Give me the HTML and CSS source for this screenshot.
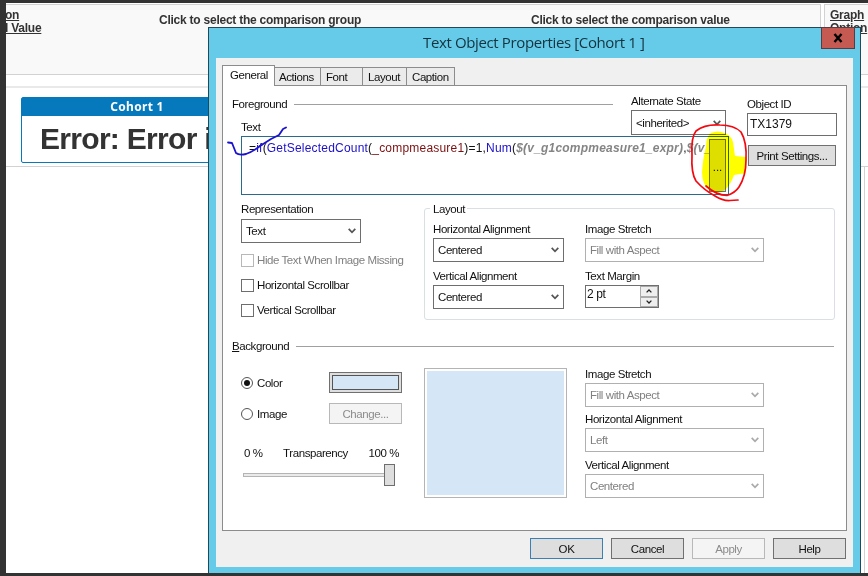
FILE: index.html
```html
<!DOCTYPE html>
<html lang="en">
<head>
    <meta charset="UTF-8">
    <meta name="viewport" content="width=device-width, initial-scale=1.0">
    <title>Text Object Properties</title>
    <link rel="stylesheet" href="styles.css">
</head>

<body>
    <!-- Document behind the dialog -->
    <div class="sheet">
        <div class="sheet-top">
            <div class="filter-panel">
                <div class="side-link cut-left"><span>on</span><span>l Value</span></div>
                <div class="group-title">Click to select the comparison group</div>
                <div class="value-title">Click to select the comparison value</div>
            </div>
            <div class="options-panel">
                <div class="side-link"><span>Graph</span><span>Option</span></div>
            </div>
        </div>
        <div class="results">
            <div class="cohort">
                <div class="cohort-caption">Cohort 1</div>
                <div class="cohort-text">Error: Error i</div>
            </div>
        </div>
        <div class="chart-row"><div class="chart-box"></div></div>
    </div>

    <!-- Properties dialog -->
    <div class="dialog">
        <div class="title-bar">
            <div class="title">Text Object Properties [Cohort 1 ]</div>
            <button class="close" aria-label="Close">
                <svg width="10" height="10" viewBox="0 0 10 10"><path d="M1.5 1L8.5 9M8.5 1L1.5 9" stroke="#000" stroke-width="2.4"/></svg>
            </button>
        </div>
        <div class="client">
            <div class="tabs">
                <div class="tab active">General</div>
                <div class="tab actions">Actions</div>
                <div class="tab font">Font</div>
                <div class="tab layout-tab">Layout</div>
                <div class="tab caption">Caption</div>
            </div>

            <div class="page">
                <div class="foreground">
                    <div class="fg-main">
                        <div class="fg-head">
                            <div class="fg-labels">
                                <div class="section-line"><span>Foreground</span><i></i></div>
                                <div class="label text-label">Text</div>
                            </div>
                            <div class="alt-state">
                                <div class="label">Alternate State</div>
                                <div class="select"><span>&lt;inherited&gt;</span><svg class="arrow" viewBox="0 0 8 6"><path d="M0.7 0.8L4 4.3L7.3 0.8"/></svg></div>
                            </div>
                        </div>
                        <div class="expression">
                            <div class="code">=<b class="fn">if</b>(<b class="fn">GetSelectedCount</b>(<b class="field">_compmeasure1</b>)=1,<b class="fn">Num</b>(<b class="var">$(v_g1compmeasure1_expr)</b>,<b class="var">$(v_</b></div>
                            <button class="more">...</button>
                        </div>
                    </div>
                    <div class="fg-side">
                        <div class="label">Object ID</div>
                        <div class="input">TX1379</div>
                        <button class="btn print">Print Settings...</button>
                    </div>
                </div>

                <div class="middle">
                    <div class="representation">
                        <div class="label">Representation</div>
                        <div class="select"><span>Text</span><svg class="arrow" viewBox="0 0 8 6"><path d="M0.7 0.8L4 4.3L7.3 0.8"/></svg></div>
                        <div class="checks">
                            <div class="check disabled"><i></i>Hide Text When Image Missing</div>
                            <div class="check"><i></i>Horizontal Scrollbar</div>
                            <div class="check"><i></i>Vertical Scrollbar</div>
                        </div>
                    </div>
                    <div class="group">
                        <div class="group-name">Layout</div>
                        <div class="group-grid">
                            <div>
                                <div class="label">Horizontal Alignment</div>
                                <div class="select"><span>Centered</span><svg class="arrow" viewBox="0 0 8 6"><path d="M0.7 0.8L4 4.3L7.3 0.8"/></svg></div>
                            </div>
                            <div>
                                <div class="label">Image Stretch</div>
                                <div class="select disabled"><span>Fill with Aspect</span><svg class="arrow" viewBox="0 0 8 6"><path d="M0.7 0.8L4 4.3L7.3 0.8"/></svg></div>
                            </div>
                            <div>
                                <div class="label">Vertical Alignment</div>
                                <div class="select"><span>Centered</span><svg class="arrow" viewBox="0 0 8 6"><path d="M0.7 0.8L4 4.3L7.3 0.8"/></svg></div>
                            </div>
                            <div>
                                <div class="label">Text Margin</div>
                                <div class="spinner">
                                    <span>2 pt</span>
                                    <div class="steps">
                                        <i><svg viewBox="0 0 6 4"><path d="M0.6 3.4L3 1L5.4 3.4"/></svg></i>
                                        <i><svg viewBox="0 0 6 4"><path d="M0.6 0.6L3 3L5.4 0.6"/></svg></i>
                                    </div>
                                </div>
                            </div>
                        </div>
                    </div>
                </div>

                <div class="section-line background-line"><span><u>B</u>ackground</span><i></i></div>

                <div class="background">
                    <div class="bg-source">
                        <div class="bg-row">
                            <div class="radio on"><i></i>Color</div>
                            <button class="btn swatch" aria-label="Color"><i></i></button>
                        </div>
                        <div class="bg-row">
                            <div class="radio"><i></i>Image</div>
                            <button class="btn disabled">Change...</button>
                        </div>
                        <div class="slider-labels"><span>0 %</span><span>Transparency</span><span>100 %</span></div>
                        <div class="slider"><div class="track"></div><div class="thumb"></div></div>
                    </div>
                    <div class="preview"></div>
                    <div class="bg-image">
                        <div class="label">Image Stretch</div>
                        <div class="select disabled"><span>Fill with Aspect</span><svg class="arrow" viewBox="0 0 8 6"><path d="M0.7 0.8L4 4.3L7.3 0.8"/></svg></div>
                        <div class="label">Horizontal Alignment</div>
                        <div class="select disabled"><span>Left</span><svg class="arrow" viewBox="0 0 8 6"><path d="M0.7 0.8L4 4.3L7.3 0.8"/></svg></div>
                        <div class="label last">Vertical Alignment</div>
                        <div class="select disabled"><span>Centered</span><svg class="arrow" viewBox="0 0 8 6"><path d="M0.7 0.8L4 4.3L7.3 0.8"/></svg></div>
                    </div>
                </div>
            </div>

            <div class="buttons">
                <button class="btn default">OK</button>
                <button class="btn">Cancel</button>
                <button class="btn disabled">Apply</button>
                <button class="btn">Help</button>
            </div>
        </div>
    </div>

    <!-- Pen and marker notes -->
    <svg class="marker" width="868" height="576" viewBox="0 0 868 576">
        <path d="M711 133Q718 130 724 133Q731 135 733 142L735 156L746 157V173L734 175Q731 184 725 190Q716 195 709 190Q702 184 702 172Q703 158 706 147Q706 137 711 133Z" fill="#ffff00"/>
    </svg>
    <svg class="pen" width="868" height="576" viewBox="0 0 868 576" fill="none" stroke-linecap="round" stroke-linejoin="round">
        <path d="M228 142.500L232 143L236 153Q239 155.500 246 154Q254 151 260 146L271 139L279 135L283 129L286 127.500" stroke="#1a12cc" stroke-width="1.800"/>
        <path d="M706 186Q716 195 727 195.500Q735 193 739 187Q746 176 746 160Q747 142 741 132Q734 125 720 125Q705 124 696 131Q691 137 692 155Q691 173 696 181Q704 190 715 196Q723 201 730 200.500L738 200" stroke="#f40810" stroke-width="1.700"/>
    </svg>
</body>
</html>
```

FILE: styles.css
```css
* {
    box-sizing: border-box;
}

body {
    margin: 0;
    width: 868px;
    height: 576px;
    padding: 3px 0 3px 6px;
    overflow: hidden;
    background-color: #333;
    font-family: "Liberation Sans", Arial, sans-serif;
    font-size: 12px;
    line-height: 14px;
    color: #111;
}

button {
    font: inherit;
    letter-spacing: inherit;
    color: inherit;
    padding: 0;
    margin: 0;
}

i, b {
    font-style: normal;
    font-weight: normal;
}

/* Sheet */
.sheet {
    height: 570px;
    background-color: #fff;
    overflow: hidden;
}

.sheet-top {
    display: flex;
    gap: 3px;
    height: 72px;
    padding-top: 1px;
}

.filter-panel,
.options-panel {
    border: 1px solid #d2d2d2;
    background-color: #f9f9f9;
    font-weight: bold;
    letter-spacing: -0.24px;
    color: #333;
}

.filter-panel {
    display: flex;
    width: 815px;
    border-left: 0;
}

.options-panel {
    flex: 1;
    padding-left: 5px;
    border-right: 0;
}

.side-link {
    display: flex;
    flex-direction: column;
    padding-top: 4px;
    line-height: 13px;
    text-decoration: underline;
}

.cut-left {
    width: 153px;
    margin-left: -1px;
    padding-right: 1px;
    flex-shrink: 0;
}

.group-title {
    width: 372px;
    padding-top: 8px;
    margin-left: 1px;
}

.value-title {
    padding-top: 8px;
}

.results {
    height: 81px;
    margin-top: 11px;
    padding: 9px 0 0 15px;
    border-top: 2px solid #e9e9e9;
    border-bottom: 1px solid #d2d2d2;
}

.cohort {
    width: 232px;
    height: 66px;
    border: 1px solid #0679bd;
    border-radius: 2px;
}

.cohort-caption {
    height: 18px;
    background-color: #0679bd;
    color: #fff;
    font: bold 12px/18px "Noto Sans", sans-serif;
    letter-spacing: 0.3px;
    text-align: center;
}

.cohort-text {
    padding: 6px 0 0 18px;
    font-size: 30px;
    line-height: 34px;
    font-weight: bold;
    letter-spacing: -0.7px;
    color: #333;
    white-space: nowrap;
}

.chart-row {
    display: flex;
    justify-content: flex-end;
}

.chart-box {
    width: 4px;
    height: 410px;
    border-left: 1px solid #d2d2d2;
}

/* Dialog */
.dialog {
    position: absolute;
    left: 208px;
    top: 27px;
    width: 653px;
    height: 546px;
    padding: 0 7px;
    border: 1px solid #24475a;
    border-bottom: 0;
    background-color: #66cbe8;
    font-size: 11.5px;
    letter-spacing: -0.42px;
}

.title-bar {
    display: flex;
    height: 30px;
}

.title {
    flex: 1;
    padding-left: 207px;
    font: 15px/29px "Open Sans", "Noto Sans", sans-serif;
    letter-spacing: -0.37px;
    color: #12333f;
}

.close {
    display: flex;
    align-items: center;
    justify-content: center;
    width: 34px;
    height: 22px;
    margin: -1px -2px 0 0;
    border: 1px solid #5b3b40;
    background-color: #c45a52;
}

.client {
    height: 509px;
    padding: 7px 6px 0;
    background-color: #f0f0f0;
}

.tabs {
    display: flex;
    align-items: flex-end;
    height: 20px;
}

.tab {
    height: 18px;
    border: 1px solid #8c8c8c;
    border-left: 0;
    border-bottom: 0;
    background-color: #ebebeb;
    line-height: 18px;
    padding-left: 5px;
}

.tab.active {
    position: relative;
    width: 53px;
    height: 21px;
    margin-bottom: -1px;
    padding-left: 7px;
    border-left: 1px solid #8c8c8c;
    background-color: #fff;
    line-height: 19px;
}

.actions {
    width: 46px;
    padding-left: 4px;
}

.font {
    width: 42px;
}

.layout-tab {
    width: 44px;
}

.caption {
    width: 48px;
}

.page {
    height: 446px;
    padding: 8px 10px 0 9px;
    border: 1px solid #8c8c8c;
    background-color: #fff;
}

.label {
    height: 14px;
    white-space: nowrap;
}

.select {
    display: flex;
    align-items: center;
    justify-content: space-between;
    height: 25px;
    padding: 0 4px;
    border: 1px solid #6e6e6e;
    background-color: #fff;
}

.arrow {
    width: 8px;
    height: 6px;
    fill: none;
    stroke: #555;
    stroke-width: 1.7;
}

.disabled {
    color: #808080;
}

.select.disabled {
    border-color: #b0b0b0;
}

.select.disabled .arrow {
    stroke: #aaa;
}

.btn {
    width: 73px;
    height: 21px;
    border: 1px solid #707070;
    background-color: #dedede;
    text-align: center;
}

.btn.disabled {
    border-color: #b8b8b8;
    background-color: #f4f4f4;
    color: #8c8c8c;
}

.btn.default {
    border-color: #3c7fb1;
}

.section-line {
    display: flex;
    align-items: center;
    gap: 7px;
    height: 14px;
}

.section-line i {
    flex: 1;
    height: 1px;
    background-color: #a0a0a0;
}

/* Foreground */
.foreground {
    display: flex;
    gap: 17px;
    height: 108px;
}

.fg-main {
    width: 498px;
    flex-shrink: 0;
}

.fg-head {
    display: flex;
    gap: 18px;
    height: 42px;
}

.fg-labels {
    width: 381px;
    flex-shrink: 0;
    padding-top: 3px;
}

.text-label {
    margin: 9px 0 0 9px;
}

.alt-state {
    width: 95px;
}

.alt-state .select {
    margin-top: 2px;
}

.expression {
    display: flex;
    width: 488px;
    height: 59px;
    margin-left: 9px;
    border: 1px solid #2c6a8c;
}

.code {
    flex: 1;
    min-width: 0;
    padding: 4px 0 0 7px;
    font-size: 12px;
    white-space: nowrap;
    letter-spacing: 0.2px;
}

.fn {
    color: #1c10c8;
}

.field {
    color: #7c1010;
}

.var {
    color: #858585;
    font-style: italic;
    font-weight: bold;
}

.more {
    width: 17px;
    height: 53px;
    margin: 2px 2px 0 0;
    padding-top: 3px;
    flex-shrink: 0;
    border: 1px solid #707070;
    background-color: #dedede;
    letter-spacing: 0;
}

.fg-side {
    width: 90px;
    flex-shrink: 0;
    padding-top: 3px;
}

.input {
    height: 23px;
    margin: 2px 0 9px;
    padding: 3px 2px;
    border: 1px solid #6e6e6e;
    font-size: 12px;
    letter-spacing: 0;
}

.print {
    width: 88px;
    margin-left: 1px;
}

/* Representation and layout */
.middle {
    display: flex;
    height: 137px;
    padding-left: 9px;
}

.representation {
    width: 183px;
}

.representation .select {
    width: 120px;
    height: 24px;
    margin-top: 3px;
}

.checks {
    display: flex;
    flex-direction: column;
    gap: 11px;
    margin-top: 10px;
}

.check {
    display: flex;
    align-items: center;
    gap: 3px;
    height: 14px;
    white-space: nowrap;
}

.check i {
    width: 13px;
    height: 13px;
    border: 1px solid #6e6e6e;
}

.check.disabled i {
    border-color: #b8b8b8;
}

.group {
    width: 411px;
    height: 112px;
    margin-top: 6px;
    padding-left: 8px;
    border: 1px solid #d9dfe3;
    border-radius: 3px;
}

.group-name {
    width: 37px;
    height: 14px;
    margin: -7px 0 6px -3px;
    padding-left: 3px;
    background-color: #fff;
}

.group-grid {
    display: grid;
    grid-template-columns: 131px 179px;
    grid-template-rows: 40px 40px;
    gap: 7px 21px;
}

.group-grid .select {
    height: 24px;
    margin-top: 2px;
}

.spinner {
    display: flex;
    justify-content: space-between;
    width: 74px;
    height: 23px;
    margin-top: 2px;
    border: 1px solid #6e6e6e;
}

.spinner span {
    padding: 1px 1px;
    font-size: 12px;
}

.steps {
    display: flex;
    flex-direction: column;
    width: 18px;
    background-color: #b0b0b0;
}

.steps i {
    display: flex;
    flex: 1;
    align-items: center;
    justify-content: center;
    border: 1px solid #aaa;
    background-color: #eee;
}

.steps svg {
    width: 6px;
    height: 4px;
    fill: none;
    stroke: #222;
    stroke-width: 1.3;
}

/* Background */
.background-line {
    width: 602px;
}

.background {
    display: flex;
    height: 130px;
    margin-top: 15px;
    padding-left: 9px;
}

.bg-source {
    width: 183px;
    padding-top: 4px;
}

.bg-row {
    display: flex;
    align-items: center;
    height: 21px;
    margin-bottom: 10px;
}

.radio {
    display: flex;
    align-items: center;
    gap: 4px;
    width: 88px;
}

.radio i {
    display: flex;
    width: 12px;
    height: 12px;
    padding: 2px;
    border: 1px solid #555;
    border-radius: 50%;
}

.radio.on i {
    background: #111 content-box;
}

.swatch {
    padding: 2px;
}

.swatch i {
    display: block;
    height: 100%;
    border: 1px solid #555;
    background-color: #d5e6f7;
}

.slider-labels {
    display: flex;
    justify-content: space-between;
    width: 158px;
    margin-top: 22px;
    padding-left: 3px;
}

.slider {
    display: flex;
    align-items: center;
    width: 154px;
    height: 22px;
    margin-top: 4px;
    padding-left: 2px;
}

.track {
    flex: 1;
    height: 4px;
    border: 1px solid #b4b4b4;
    border-right: 0;
    background-color: #eaeaea;
}

.thumb {
    width: 11px;
    height: 22px;
    border: 1px solid #6e6e6e;
    background-color: #dedede;
}

.preview {
    width: 143px;
    height: 130px;
    padding: 2px;
    border: 1px solid #b4b4b4;
    background: #d5e6f7 content-box;
}

.bg-image {
    width: 179px;
    margin: -1px 0 0 18px;
}

.bg-image .select {
    height: 24px;
    margin: 2px 0 5px;
}

.bg-image .last {
    margin-top: 6px;
}

/* Dialog buttons */
.buttons {
    display: flex;
    justify-content: flex-end;
    gap: 8px;
    margin: 7px 1px 0 0;
}

/* Notes drawn over the dialog */
.marker,
.pen {
    position: absolute;
    left: 0;
    top: 0;
    pointer-events: none;
}

.marker {
    mix-blend-mode: multiply;
}
```
